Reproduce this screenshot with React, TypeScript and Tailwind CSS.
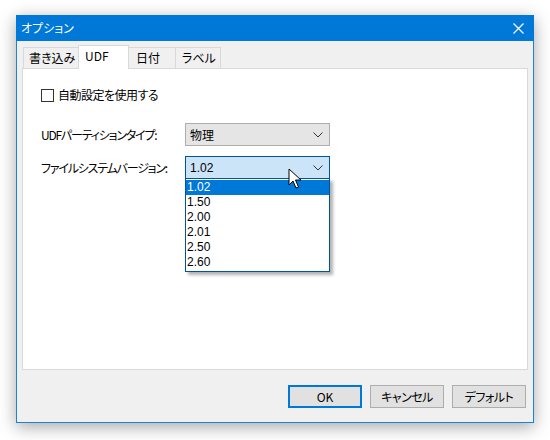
import React from "react";

const font = { fontFamily: '"Noto Sans CJK JP", "Noto Sans", sans-serif' };

function Chevron() {
  return (
    <svg width="10" height="6" viewBox="0 0 10 6" className="shrink-0">
      <path d="M0.5 0.5 L5 5 L9.5 0.5" fill="none" stroke="#333" strokeWidth="1" />
    </svg>
  );
}

export default function App() {
  const items = ["1.02", "1.50", "2.00", "2.01", "2.50", "2.60"];
  return (
    <div
      className="h-[440px] w-[550px] overflow-hidden bg-white pl-[16px] pt-[15px] text-black [font-feature-settings:'palt']"
      style={font}
    >
      <div className="relative flex h-[408px] w-[518px] flex-col border border-t-0 border-[#1883d7] bg-[#f0f0f0] shadow-[0_4px_16px_rgba(0,0,0,0.35)]">
        {/* title bar */}
        <div className="-mx-px flex h-[26px] items-center justify-between bg-[#0078d7] pl-[5px] pr-[10px]">
          <span className="text-[12px] leading-none text-white">オプション</span>
          <svg width="11" height="11" viewBox="0 0 11 11">
            <path d="M0.5 0.5 L10.5 10.5 M10.5 0.5 L0.5 10.5" stroke="white" strokeWidth="1.2" />
          </svg>
        </div>

        {/* tabs */}
        <div className="mt-[4px] flex h-[23px] items-end pl-[6px]">
          <div className="h-[21px] w-[56px] border border-b-0 border-[#d9d9d9] bg-[#f0f0f0] pl-[5px] pt-[2px] text-[12px] leading-[16px]">
            書き込み
          </div>
          <div className="relative z-10 -mb-px -ml-px h-[24px] w-[51px] border border-b-0 border-[#d9d9d9] bg-white pl-[6px] pt-[2px] text-[12px] leading-[16px]">
            UDF
          </div>
          <div className="-ml-px h-[21px] w-[48px] border border-b-0 border-[#d9d9d9] bg-[#f0f0f0] pl-[7px] pt-[2px] text-[12px] leading-[16px]">
            日付
          </div>
          <div className="-ml-px h-[21px] w-[46px] border border-b-0 border-[#d9d9d9] bg-[#f0f0f0] pl-[6px] pt-[2px] text-[12px] leading-[16px]">
            ラベル
          </div>
        </div>

        {/* panel */}
        <div className="relative ml-[5px] h-[302px] w-[506px] border border-[#d9d9d9] bg-white">
          <div className="ml-[18px] mt-[18px] flex items-center gap-[4px]">
            <div className="h-[13px] w-[13px] border border-[#333] bg-white" />
            <span className="text-[12px] leading-[16px] tracking-[-0.5px]">自動設定を使用する</span>
          </div>

          <div className="ml-[18px] mt-[20px] flex items-center">
            <span className="w-[144px] text-[12px] leading-[16px] tracking-[-1.2px]">UDFパーティションタイプ:</span>
            <div className="flex h-[23px] w-[145px] items-center justify-between border border-[#adadad] bg-[#e5e5e5] pl-[4px] pr-[6px]">
              <span className="text-[12px] leading-[16px]">物理</span>
              <Chevron />
            </div>
          </div>

          <div className="ml-[18px] mt-[10px] flex items-center">
            <span className="w-[144px] text-[12px] leading-[16px] tracking-[-1.2px]">ファイルシステムバージョン:</span>
            <div className="relative flex h-[23px] w-[145px] items-center justify-between border border-[#005499] bg-[#cce4f7] pl-[4px] pr-[6px]">
              <span className="font-['Liberation_Sans',sans-serif] text-[12px] leading-[16px]">1.02</span>
              <Chevron />
              {/* dropdown list */}
              <div className="absolute left-[-1px] top-[21px] z-20 w-[145px] border border-[#005499] bg-white py-px font-['Liberation_Sans',sans-serif] shadow-[3px_3px_3px_rgba(0,0,0,0.3)]">
                {items.map((it, i) => (
                  <div
                    key={it}
                    className={
                      i === 0
                        ? "h-[15px] bg-[#0078d7] pl-[1px] text-[12px] leading-[15px] text-white"
                        : "h-[15px] pl-[1px] text-[12px] leading-[15px]"
                    }
                  >
                    {it}
                  </div>
                ))}
              </div>
            </div>
          </div>

          {/* mouse cursor */}
          <svg
            className="absolute left-[265px] top-[99px] z-30"
            width="14"
            height="22"
            viewBox="0 0 14 22"
          >
            <path
              d="M1 1 L1 17 L5 13 L8 20 L10.5 19 L7.5 12 L13 12 Z"
              fill="white"
              stroke="black"
              strokeWidth="1"
              strokeLinejoin="round"
            />
          </svg>
        </div>

        {/* buttons */}
        <div className="mt-[15px] flex justify-end gap-[8px] pr-[7px]">
          <button className="h-[23px] w-[74px] border-2 border-[#0078d7] bg-[#e1e1e1] text-[12px] leading-none">
            OK
          </button>
          <button className="h-[23px] w-[74px] border border-[#adadad] bg-[#e1e1e1] text-[12px] leading-none tracking-[-0.5px]">
            キャンセル
          </button>
          <button className="h-[23px] w-[74px] border border-[#adadad] bg-[#e1e1e1] text-[12px] leading-none tracking-[-0.5px]">
            デフォルト
          </button>
        </div>
      </div>
    </div>
  );
}
